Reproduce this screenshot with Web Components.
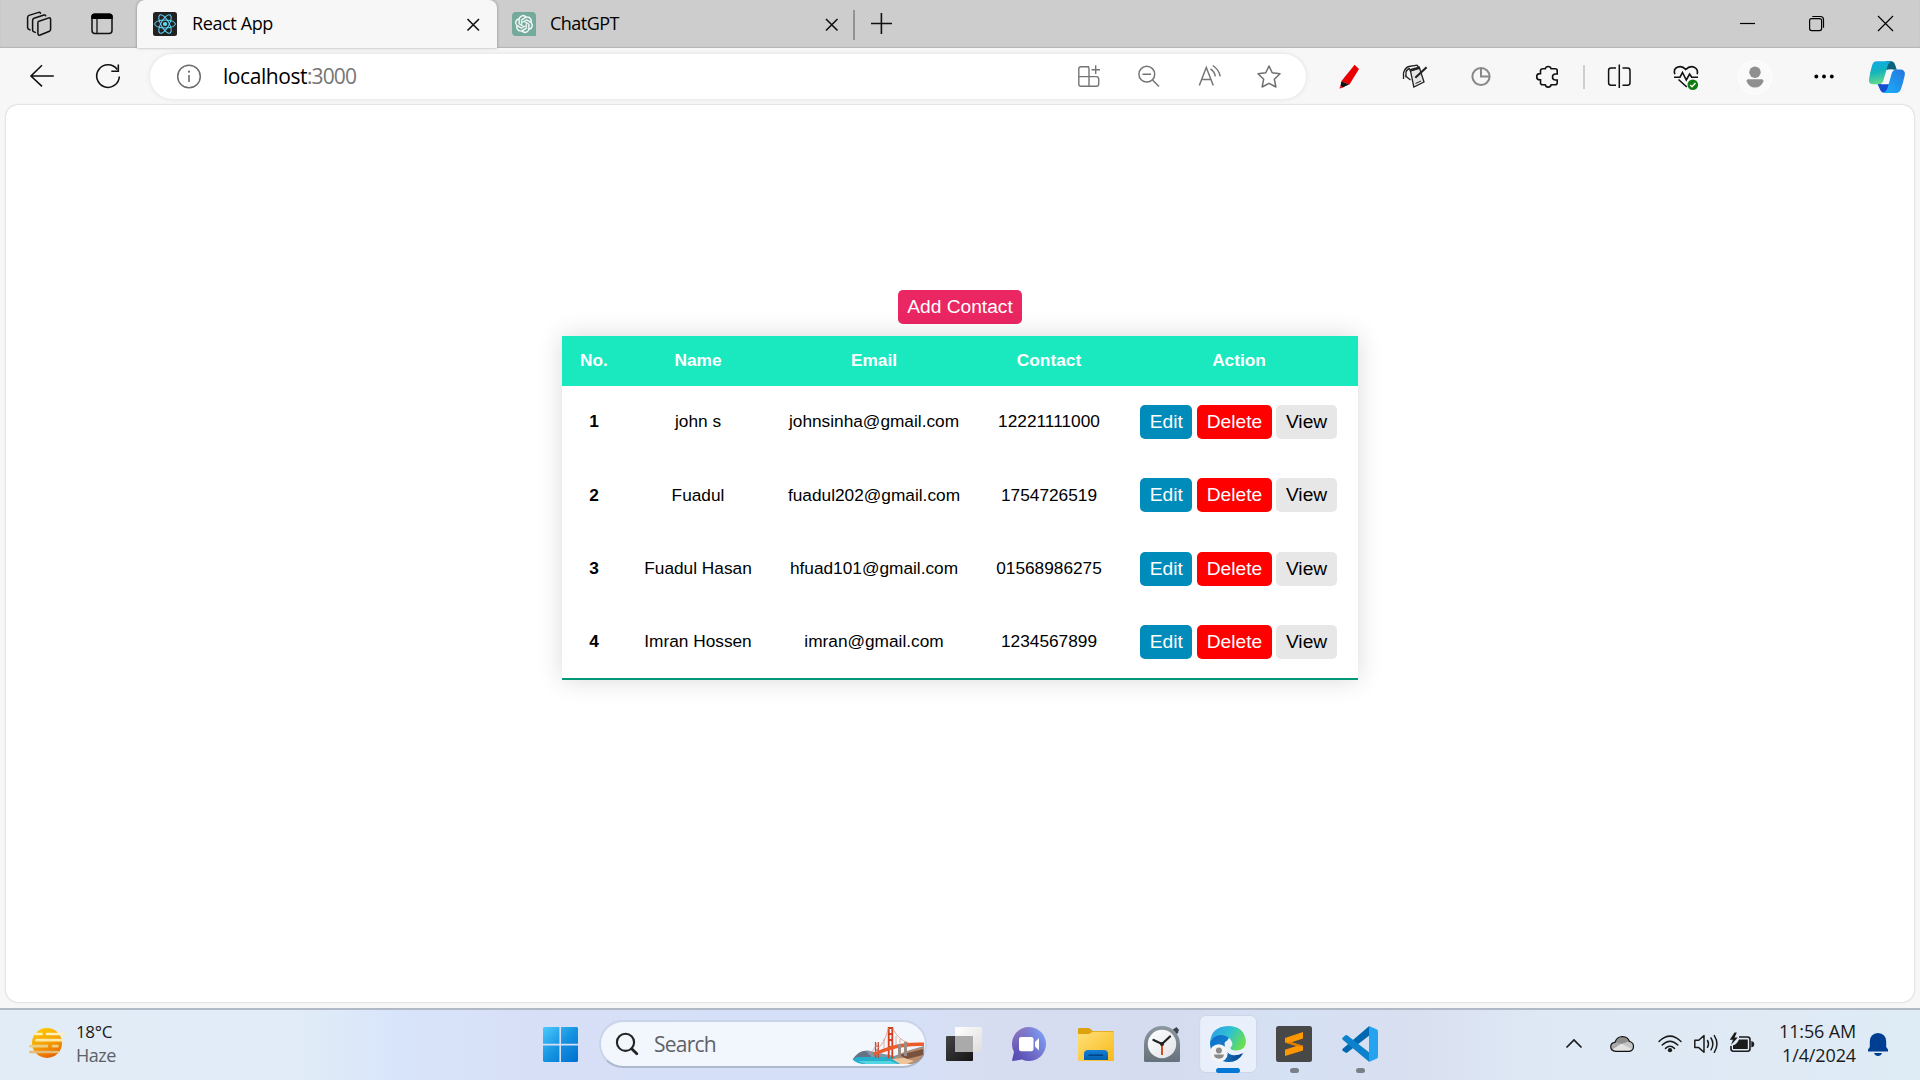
<!DOCTYPE html>
<html lang="en">
<head>
<meta charset="utf-8">
<title>React App</title>
<style>
html,body{margin:0;height:100%;overflow:hidden;font-family:"Open Sans","Noto Sans",sans-serif;color:#000}
</style>
</head>
<body>
<desktop-screen></desktop-screen>
<script>
const ICONS = {
workspaces:`<g fill="none" stroke="#111" stroke-width="1.5" stroke-linejoin="round" stroke-linecap="round"><path d="M38.3 21.5 L49 17.9 Q50.6 17.6 50.6 19.2 V29.3 Q50.6 30.7 49.4 31.3 L40.2 35 Q38.3 35.6 37.9 33.8 V23 Q37.9 21.8 38.3 21.5Z"/><path d="M35.3 32.4 L33.5 31.6 Q32.6 31.2 32.6 30 V20.4 Q32.7 18.8 34 18.2 L44 15 Q45.3 14.7 45.7 15.8"/><path d="M30 29.9 L28.4 29 Q27.6 28.5 27.6 27.3 V17.5 Q27.7 16 29 15.4 L38.7 12.4 Q40 12.2 40.5 13.3"/></g>`,
tabmenu:`<rect x="92" y="14.3" width="20" height="19.3" rx="3" fill="none" stroke="#111" stroke-width="1.5"/><path d="M91.3 19 V16.5 Q91.3 13.5 94.5 13.5 H109.5 Q112.7 13.5 112.7 16.5 V19Z"/><path d="M97 19 V33.5" stroke="#111" stroke-width="1.3"/>`,
react:`<rect x="153" y="12" width="24" height="24" rx="2.5" fill="#222"/><g fill="none" stroke="#61dafb" stroke-width="1"><ellipse cx="165" cy="24" rx="10.4" ry="4"/><ellipse cx="165" cy="24" rx="10.4" ry="4" transform="rotate(60 165 24)"/><ellipse cx="165" cy="24" rx="10.4" ry="4" transform="rotate(120 165 24)"/></g><circle cx="165" cy="24" r="2.1" fill="#61dafb"/>`,
close1:`<path d="M467.5 19 L479 30.5 M479 19 L467.5 30.5" stroke="#111" stroke-width="1.6"/>`,
gpt:`<path d="M512 16 Q512 12 516 12 H532 Q536 12 536 16 V36 H516 Q512 36 512 32Z" fill="#74aa9c"/><g transform="translate(515.1 15.1) scale(.742)"><path fill="#fff" stroke="#fff" stroke-width=".3" d="M22.2819 9.8211a5.9847 5.9847 0 0 0-.5157-4.9108 6.0462 6.0462 0 0 0-6.5098-2.9A6.0651 6.0651 0 0 0 4.9807 4.1818a5.9847 5.9847 0 0 0-3.9977 2.9 6.0462 6.0462 0 0 0 .7427 7.0966 5.98 5.98 0 0 0 .511 4.9107 6.051 6.051 0 0 0 6.5146 2.9001A5.9847 5.9847 0 0 0 13.2599 24a6.0557 6.0557 0 0 0 5.7718-4.2058 5.9894 5.9894 0 0 0 3.9977-2.9001 6.0557 6.0557 0 0 0-.7475-7.0729zm-9.022 12.6081a4.4755 4.4755 0 0 1-2.8764-1.0408l.1419-.0804 4.7783-2.7582a.7948.7948 0 0 0 .3927-.6813v-6.7369l2.02 1.1686a.071.071 0 0 1 .038.052v5.5826a4.504 4.504 0 0 1-4.4945 4.4944zm-9.6607-4.1254a4.4708 4.4708 0 0 1-.5346-3.0137l.142.0852 4.783 2.7582a.7712.7712 0 0 0 .7806 0l5.8428-3.3685v2.3324a.0804.0804 0 0 1-.0332.0615L9.74 19.9502a4.4992 4.4992 0 0 1-6.1408-1.6464zM2.3408 7.8956a4.485 4.485 0 0 1 2.3655-1.9728V11.6a.7664.7664 0 0 0 .3879.6765l5.8144 3.3543-2.0201 1.1685a.0757.0757 0 0 1-.071 0l-4.8303-2.7865A4.504 4.504 0 0 1 2.3408 7.872zm16.5963 3.8558L13.1038 8.364 15.1192 7.2a.0757.0757 0 0 1 .071 0l4.8303 2.7913a4.4944 4.4944 0 0 1-.6765 8.1042v-5.6772a.79.79 0 0 0-.407-.667zm2.0107-3.0231l-.142-.0852-4.7735-2.7818a.7759.7759 0 0 0-.7854 0L9.409 9.2297V6.8974a.0662.0662 0 0 1 .0284-.0615l4.8303-2.7866a4.4992 4.4992 0 0 1 6.6802 4.66zM8.3065 12.863l-2.02-1.1638a.0804.0804 0 0 1-.038-.0567V6.0742a4.4992 4.4992 0 0 1 7.3757-3.4537l-.142.0805L8.704 5.459a.7948.7948 0 0 0-.3927.6813zm1.0976-2.3654l2.602-1.4998 2.6069 1.4998v2.9994l-2.5974 1.4997-2.6067-1.4997Z"/></g>`,
close2:`<path d="M826 19 L837.5 30.5 M837.5 19 L826 30.5" stroke="#111" stroke-width="1.6"/>`,
plus:`<path d="M854 10 V40" stroke="#858585" stroke-width="1.6"/><path d="M871 23.5 H892 M881.4 13 V34" stroke="#111" stroke-width="1.6"/>`,
min:`<path d="M1740 23.5 H1755" stroke="#000" stroke-width="1.2"/>`,
restore:`<g fill="none" stroke="#000" stroke-width="1.2"><rect x="1809.6" y="18.6" width="12" height="12" rx="2"/><path d="M1812.3 16.5 H1820.5 Q1823.5 16.5 1823.5 19.5 V27.8"/></g>`,
winclose:`<path d="M1878 16 L1893 31 M1893 16 L1878 31" stroke="#000" stroke-width="1.2"/>`,
back:`<path d="M53.8 76 H31 M42 65.3 L31 76 L42 86.3" fill="none" stroke="#111" stroke-width="1.6"/>`,
reload:`<path d="M117.2 69.5 A11.3 11.3 0 1 0 119.3 76.5" fill="none" stroke="#111" stroke-width="1.6"/><path d="M118.3 64.5 V71.2 H111.3" fill="none" stroke="#111" stroke-width="1.6"/>`,
info:`<circle cx="189" cy="76.5" r="11.3" fill="none" stroke="#6d6d6d" stroke-width="1.5"/><path d="M189 75 V82" stroke="#6d6d6d" stroke-width="1.6"/><circle cx="189" cy="71.7" r="1.1" fill="#6d6d6d"/>`,
apps:`<g fill="none" stroke="#757575" stroke-width="1.4"><path d="M1089 66.7 H1081 Q1078.8 66.7 1078.8 69 V84 Q1078.8 86.3 1081 86.3 H1096.5 Q1098.7 86.3 1098.7 84 V78.8 Q1098.7 76.6 1096.5 76.6 H1078.8 M1089 86.3 V68.5 Q1089 66.7 1087 66.7 H1081"/><path d="M1091.5 69.7 H1100 M1095.7 65.3 V74"/></g>`,
zoomout:`<g fill="none" stroke="#757575" stroke-width="1.5"><circle cx="1146.8" cy="74.2" r="7.9"/><path d="M1142.5 74.2 H1151 M1152.5 80 L1159 86.5"/></g>`,
read:`<g fill="none" stroke="#757575" stroke-width="1.5"><path d="M1199.3 85.5 L1206.3 67.5 L1213.3 85.5 M1202 79.5 H1210.7"/><path d="M1210.5 68.8 Q1214.6 71.5 1215.3 76.3 M1212.8 65.5 Q1218.7 69.5 1220.3 76.3"/></g>`,
star:`<path d="M1269 66 L1272.2 72.7 L1280 73.8 L1274.3 79.2 L1275.9 87 L1269 83.3 L1262.1 87 L1263.7 79.2 L1258 73.8 L1265.8 72.7Z" fill="none" stroke="#6f6f6f" stroke-width="1.5" stroke-linejoin="round"/>`,
pen:`<path d="M1354.6 64.8 L1359 69 L1349.3 84.7 L1341.3 81.2Z" fill="#e80000"/><path d="M1341.3 81.2 L1349 84.6 L1342.8 87.6 L1340.5 86Z" fill="#111"/><path d="M1340.5 85.6 L1343.3 87.8 L1339.4 88.6Z" fill="#f01020"/>`,
notebook:`<g fill="none" stroke="#222" stroke-width="1.3"><path d="M1410.5 71 L1419.5 68 L1424 82 L1413.8 87Z" fill="#e5e5e5"/><path d="M1409.5 70.6 L1420 67.6" stroke-width="2.6"/><path d="M1403.5 79 V73 Q1405 67.5 1409 66.5 L1417 65.2 L1418.8 67.5 M1406 77.5 V72 Q1407 68.8 1410 68.5 M1410.5 80 L1405 75.5"/><path d="M1426.6 67.3 L1415.3 77.8" stroke-width="2.2"/><path d="M1415.5 83.5 L1421 81" stroke-width="1"/></g>`,
pie:`<g fill="none" stroke="#888" stroke-width="2"><circle cx="1481" cy="76.5" r="8.6"/><path d="M1481 68 V76.5 H1489.5"/></g>`,
puzzle:`<path d="M1543 68.8 H1545.2 A3.1 3.1 0 0 1 1551.2 68.8 H1555.2 Q1557.2 68.8 1557.2 70.8 V74 H1555.5 A3 3 0 0 0 1555.5 80 H1557.2 V82.8 Q1557.2 84.8 1555.2 84.8 H1551.2 A3.1 3.1 0 0 1 1545.2 84.8 H1542.6 Q1540.5 84.8 1540.5 82.8 V79.8 H1539.8 A3 3 0 0 1 1539.8 73.6 H1540.5 V70.8 Q1540.5 68.8 1543 68.8Z" fill="none" stroke="#111" stroke-width="1.6"/>`,
divider:`<path d="M1584 65 V89" stroke="#c8c8c8" stroke-width="1.7"/>`,
split:`<g fill="none" stroke="#111" stroke-width="1.5"><path d="M1616 68 H1611 Q1608.6 68 1608.6 70.4 V82.8 Q1608.6 85.2 1611 85.2 H1616 M1622.5 68 H1627.6 Q1630 68 1630 70.4 V82.8 Q1630 85.2 1627.6 85.2 H1622.5 M1619.3 64.5 V88"/></g>`,
heart:`<g fill="none" stroke="#111" stroke-width="1.6"><path d="M1674.8 74.2 Q1673.2 69.3 1677.2 67.3 Q1682 65.3 1685.8 69.5 Q1689.8 65.3 1694.3 67.3 Q1698.5 69.5 1697.2 74.2"/><path d="M1674 77.2 H1680 L1682.5 72.5 L1686.3 80 L1689.6 74 L1691.7 77.2 H1698 M1678.5 79.5 L1686.8 87"/></g><circle cx="1692.8" cy="84.8" r="5.3" fill="#107c10"/><path d="M1690.2 85 L1692 86.8 L1695.5 83" fill="none" stroke="#fff" stroke-width="1.4"/>`,
profile:`<circle cx="1755" cy="77.3" r="16.8" fill="#fafafa" stroke="#fff"/><circle cx="1755" cy="72.2" r="5.7" fill="#8f8f8f"/><path d="M1748 79.2 H1762 Q1764 79.5 1763.4 81.5 Q1761 87.5 1755 87.5 Q1749 87.5 1746.7 81.5 Q1746 79.5 1748 79.2Z" fill="#8f8f8f"/>`,
dots:`<circle cx="1816.3" cy="76.5" r="1.9"/><circle cx="1824" cy="76.5" r="1.9"/><circle cx="1831.8" cy="76.5" r="1.9"/>`,
copilot:`<defs><linearGradient id="a" x1="0" y1="0" x2=".2" y2="1"><stop offset="0" stop-color="#10a8ec"/><stop offset=".5" stop-color="#14b4bd"/><stop offset="1" stop-color="#60d98c"/></linearGradient><linearGradient id="b" x1="1" y1="0" x2="0" y2="1"><stop offset="0" stop-color="#2674dd"/><stop offset="1" stop-color="#18b4fc"/></linearGradient></defs><path d="M1886 61 H1890 Q1894 61 1895.2 65 L1896.8 69.8 H1885Z" fill="#0c617d"/><path d="M1877.5 84 H1889 L1887 93 Q1881.5 93.5 1880 89.5Z" fill="#164ed3"/><path d="M1876.5 61.2 H1892 Q1888.8 62 1887.6 66 L1883.4 80.5 Q1882.3 84.3 1878.5 84.3 H1872.5 Q1868 84 1869.1 79 Q1870 72 1872.2 65 Q1873.3 61.2 1876.5 61.2Z" fill="url(#a)"/><path d="M1896.5 69.5 H1900 Q1905.6 69.5 1904.8 75 Q1903 83.5 1901 89 Q1899.5 93 1896 93 H1883 Q1886.3 92 1887.4 88.5 L1891.5 74 Q1892.7 69.5 1896.5 69.5Z" fill="url(#b)"/><path d="M1888.5 69.6 H1893.5 Q1891.6 70.5 1890.8 73.5 L1887.8 84.2 H1881 Q1883 83.4 1883.8 80.5 L1886.3 72 Q1886.9 69.8 1888.5 69.6Z" fill="#f7f7f7"/>`,
weather:`<defs><linearGradient id="w" x1=".3" y1="0" x2=".7" y2="1"><stop offset="0" stop-color="#ffc800"/><stop offset=".5" stop-color="#f5a000"/><stop offset="1" stop-color="#e65f00"/></linearGradient></defs><circle cx="47" cy="1043" r="15" fill="url(#w)"/><g stroke-linecap="round" stroke-width="2.7"><path d="M36 1034 H41.5 M47 1034 H63.5" stroke="#fff0c0"/><path d="M36.5 1040.2 H61.5" stroke="#ffe9a9"/><path d="M30.3 1046.2 H47 M53 1046.2 H57.5" stroke="#ecce80"/><path d="M30.5 1052 H58" stroke="#e6bd78"/></g>`,
start:`<defs><linearGradient id="s" gradientUnits="userSpaceOnUse" x1="543" y1="1027" x2="578" y2="1062"><stop offset="0" stop-color="#4cc9ff"/><stop offset=".5" stop-color="#1593e0"/><stop offset="1" stop-color="#006fd0"/></linearGradient></defs><path fill="url(#s)" d="M544 1027 H559.4 V1043.8 H543 V1028Z M561 1027 H577 L578 1028 V1043.8 H561Z M543 1045.4 H559.4 V1062 H544 L543 1061Z M561 1045.4 H578 V1061 L577 1062 H561Z"/>`,
mag:`<circle cx="625.5" cy="1042.3" r="8.6" fill="none" stroke="#222" stroke-width="2.1"/><path d="M631.7 1048.7 L636.8 1053.8" stroke="#222" stroke-width="2.8" stroke-linecap="round"/>`,
bridge:`<path d="M853 1059 Q860 1050 868 1050.5 L879 1053 L894 1056 L910 1050 L924 1046 V1055 Q920 1064 908 1064 H864 Q856 1063 853 1059Z" fill="#8295a4"/><path d="M853 1059 Q859 1050 866 1051 L872 1058Z" fill="#647485"/><path d="M857 1057 H895 L912 1062 L909 1064 H866 Q857 1064 852.5 1059.5Z" fill="#26b0ce"/><path d="M858 1061 H890 L898 1064 H866Z" fill="#55d4e4"/><path d="M893 1059 L904 1052 L924 1047 V1053 Q921 1062 910 1064 H902Z" fill="#b98d6d"/><path d="M899 1055 L923 1049 V1055 L907 1059Z" fill="#79523f"/><path d="M892 1059 L904 1058 L914 1061 L907 1064 H900Z" fill="#efc59c"/><path d="M875.5 1042 V1058 M878.3 1042 V1058 M875.5 1046 H878.3 M875.5 1050 H878.3" stroke="#c0452f" stroke-width="1.2"/><path d="M888.7 1027 V1058.5 M892.3 1027 V1058.5 M888 1028 H893 M888 1034 H893 M888 1040 H893 M888 1047 H893" stroke="#d2401f" stroke-width="1.8"/><path d="M892.5 1028 Q898 1040 909 1043 M888.5 1028 Q884 1045 877 1049 M877 1043 Q873 1052 869 1054 M884 1039 V1050 M896 1036 V1048 M900 1039 V1046" fill="none" stroke="#dc8a72" stroke-width=".7"/><path d="M873 1053 Q890 1045 903 1043.5 Q914 1042 924 1042.5 V1046 Q905 1045.5 892 1049.5 L874 1055.5Z" fill="#ed5b2a"/><path d="M899.5 1044 V1057 M905.5 1042 V1056" stroke="#9b8d83" stroke-width="3"/>`,
taskview:`<defs><linearGradient id="t1" x1="0" y1="0" x2="1" y2="1"><stop offset="0" stop-color="#444"/><stop offset="1" stop-color="#151515"/></linearGradient><linearGradient id="t2" x1="0" y1="0" x2="1" y2="1"><stop offset="0" stop-color="#fff"/><stop offset="1" stop-color="#ddd"/></linearGradient></defs><rect x="946" y="1036" width="27" height="25" rx="1" fill="url(#t1)"/><rect x="955" y="1027" width="27" height="25" rx="1" fill="url(#t2)"/><path d="M955 1036 H973 V1052 H955Z" fill="#aaa"/>`,
chat:`<defs><linearGradient id="c" x1=".9" y1=".2" x2=".1" y2=".8"><stop offset="0" stop-color="#7d9af0"/><stop offset=".5" stop-color="#7170cc"/><stop offset="1" stop-color="#5a4fb4"/></linearGradient><linearGradient id="c2" x1="0" y1="0" x2="1" y2="1"><stop offset="0" stop-color="#a775b6" stop-opacity=".9"/><stop offset=".45" stop-color="#8a72be" stop-opacity="0"/></linearGradient></defs><path d="M1029 1027 A17 17 0 1 1 1022 1059.5 L1013 1061 Q1011.5 1061 1012.2 1059.5 L1014 1052 A17 17 0 0 1 1029 1027Z" fill="url(#c)"/><path d="M1029 1027 A17 17 0 1 1 1022 1059.5 L1013 1061 Q1011.5 1061 1012.2 1059.5 L1014 1052 A17 17 0 0 1 1029 1027Z" fill="url(#c2)"/><rect x="1019" y="1037" width="14.5" height="14.3" rx="2.2" fill="#fff"/><path d="M1035 1042 L1039 1038 V1050.5 L1035 1046.5Z" fill="#fff"/>`,
folder:`<defs><linearGradient id="f" x1="0" y1="0" x2="1" y2="1"><stop offset="0" stop-color="#ffe07a"/><stop offset="1" stop-color="#f8ba1a"/></linearGradient><linearGradient id="f2" x1="0" y1="0" x2="0" y2="1"><stop offset="0" stop-color="#1580d8"/><stop offset="1" stop-color="#0560b0"/></linearGradient></defs><path d="M1078 1029.3 Q1078 1028 1079.5 1028 H1088 Q1089.5 1028 1090.5 1029 L1092.7 1031 H1112.5 Q1114 1031 1114 1032.5 V1040 H1078Z" fill="#dda30f"/><path d="M1078 1034 H1089 L1092.6 1031.8 H1112.5 Q1114 1031.8 1114 1033.5 V1061 H1079.5 Q1078 1061 1078 1059.5Z" fill="url(#f)"/><path d="M1084 1060 V1054 Q1084 1050 1088 1050 H1104 Q1108 1050 1108 1054 V1060Z" fill="url(#f2)"/><path d="M1088.5 1055.2 H1103" stroke="#003f80" stroke-width="1.4"/>`,
clock:`<defs><linearGradient id="k" x1="0" y1="0" x2="0" y2="1"><stop offset="0" stop-color="#8b98a0"/><stop offset="1" stop-color="#66727b"/></linearGradient><linearGradient id="k2" x1="0" y1="0" x2="1" y2="1"><stop offset="0" stop-color="#fff"/><stop offset="1" stop-color="#dfe2e5"/></linearGradient></defs><path d="M1174 1029 L1176.5 1027 L1179 1030 L1178 1032Z M1171.5 1031 L1174.5 1028.3 L1178.5 1032.3 L1176 1035Z" fill="#3d454c"/><path d="M1144 1044 A18 18 0 0 1 1180 1044 V1060.5 Q1180 1062 1178.5 1062 H1145.5 Q1144 1062 1144 1060.5Z" fill="url(#k)"/><circle cx="1162" cy="1044" r="14.2" fill="url(#k2)"/><path d="M1162 1044 V1055" stroke="#d83b01" stroke-width="1.8"/><path d="M1153.5 1040 L1162 1044 L1170 1036.5" fill="none" stroke="#222" stroke-width="2.3" stroke-linecap="round"/><circle cx="1162" cy="1044" r="2" fill="#222"/>`,
edge:`<defs><linearGradient id="e1" x1="0" y1=".2" x2="1" y2=".6"><stop offset="0" stop-color="#2b9fe8"/><stop offset=".5" stop-color="#2fc2d0"/><stop offset="1" stop-color="#6be04b"/></linearGradient><linearGradient id="e2" x1="0" y1="0" x2=".7" y2="1"><stop offset="0" stop-color="#0b6cc6"/><stop offset="1" stop-color="#1592e2"/></linearGradient><linearGradient id="e3" x1="0" y1="0" x2="1" y2="0"><stop offset="0" stop-color="#1a86d0"/><stop offset="1" stop-color="#0a3f87"/></linearGradient></defs><rect x="1199.7" y="1015.5" width="56.8" height="57" rx="6" fill="#eaf0fb" fill-opacity=".95" stroke="#cdd6ea"/><path d="M1210 1042 Q1217 1028 1230 1036 Q1223 1045 1229 1054 Q1236 1059 1243.5 1053 Q1238 1063 1226 1062 Q1210 1059 1210 1042Z" fill="url(#e2)"/><path d="M1225 1040 Q1223 1053 1232 1055 Q1238 1056 1243 1052.8 Q1238.5 1062 1228 1062 Q1216 1059 1217 1048 Q1219 1041 1225 1040Z" fill="url(#e3)"/><path d="M1224.5 1043 Q1225.5 1040 1229 1040.5 Q1232.5 1042 1231 1046 L1229.8 1048.5 Q1231 1050.8 1236 1050.6 L1243.5 1050 L1243 1053 Q1237 1055.8 1232 1054.8 Q1224.5 1052.5 1224.5 1043Z" fill="#eaf0fb"/><path d="M1210 1043 Q1211 1026.5 1228 1026 Q1244 1026 1246 1041 Q1246 1050 1236.5 1050.4 Q1229 1050.5 1230.8 1047 Q1233 1045.5 1232 1042 Q1228.5 1035 1220.5 1035 Q1212.5 1035.5 1210 1043Z" fill="url(#e1)"/><circle cx="1218.7" cy="1053.2" r="9" fill="#f4f4f6"/><circle cx="1218.9" cy="1050.6" r="3" fill="#8b8b8b"/><path d="M1214 1054.5 H1223.8 Q1224 1058.5 1219 1058.7 Q1214 1058.5 1214 1054.5Z" fill="#8b8b8b"/><rect x="1216" y="1068" width="24" height="5" rx="2.5" fill="#0578d5"/>`,
sublime:`<rect x="1276" y="1026" width="36" height="36" rx="2.5" fill="#484848"/><path d="M1285 1038 L1303 1032 V1038.4 L1291.5 1042.2 L1303 1045.7 V1050.5 L1285 1056 V1049.7 L1296.5 1046 L1285 1042.5Z" fill="#ff9800"/><path d="M1285 1042.5 L1291.5 1042.2 L1303 1045.7 V1047 L1296.5 1046Z" fill="#e07e00"/><rect x="1290" y="1068" width="9" height="5" rx="2.5" fill="#7b7f88"/>`,
vscode:`<path d="M1342.3 1050.5 L1345.4 1052.6 Q1346.3 1053.2 1347.3 1052.5 L1369.3 1035.5 V1026 L1343 1048.5 Q1342 1049.5 1342.3 1050.5Z" fill="#0068b0"/><path d="M1342.3 1038 L1345.4 1035.2 Q1346.5 1034.7 1347.5 1035.4 L1369.3 1052.5 V1062 L1343 1040 Q1341.8 1039 1342.3 1038Z" fill="#0b82cb"/><path d="M1369 1026 L1377 1029.5 Q1378 1030 1378 1031.5 V1056.5 Q1378 1058 1377 1058.5 L1369 1062 Z" fill="#24a4ee"/><rect x="1356" y="1068" width="9" height="5" rx="2.5" fill="#7b7f88"/>`,
chevron:`<path d="M1566.5 1047.5 L1574 1040 L1581.5 1047.5" fill="none" stroke="#1b1b1b" stroke-width="1.7"/>`,
cloud:`<path d="M1616 1051.3 Q1610.7 1051 1610.7 1046.5 Q1611 1042.5 1615 1042.3 Q1617 1036.5 1622.5 1036.5 Q1628 1036.8 1629.5 1041.5 Q1633.5 1042.5 1633.5 1046.5 Q1633.3 1051 1629 1051.3Z" fill="#e2e2e2"/><path d="M1611 1047 Q1611 1042.5 1615 1042.3 L1621.5 1043.5 L1612.5 1049.5Z" fill="#aaa"/><path d="M1615 1042.3 Q1617 1036.5 1622.5 1036.5 Q1628 1036.8 1629.5 1041.5 L1622 1044Z" fill="#8e8e8e"/><path d="M1622 1044 L1629.5 1041.5 Q1633.5 1042.5 1633.5 1046.5 L1632 1049Z" fill="#c5c5c5"/><path d="M1616 1051.3 Q1610.7 1051 1610.7 1046.5 Q1611 1042.5 1615 1042.3 Q1617 1036.5 1622.5 1036.5 Q1628 1036.8 1629.5 1041.5 Q1633.5 1042.5 1633.5 1046.5 Q1633.3 1051 1629 1051.3Z" fill="none" stroke="#111" stroke-width="1.2"/>`,
wifi:`<g fill="none" stroke="#1b1b1b" stroke-width="1.5" stroke-linecap="round"><path d="M1659 1041.5 Q1670 1030.8 1681 1041.5"/><path d="M1662.2 1045 Q1670 1037.5 1677.8 1045"/><path d="M1665.5 1048.4 Q1670 1044 1674.5 1048.4"/></g><circle cx="1670" cy="1050.2" r="2.1" fill="#1b1b1b"/>`,
speaker:`<g fill="none" stroke="#1b1b1b" stroke-width="1.5" stroke-linecap="round" stroke-linejoin="round"><path d="M1694.8 1040.3 H1698.7 L1704 1035.6 V1052.2 L1698.7 1047.6 H1694.8Z"/><path d="M1707.5 1040.5 Q1709.5 1043.9 1707.5 1047.3 M1711 1038 Q1714.7 1043.9 1711 1049.8 M1714.3 1035.6 Q1719.6 1043.9 1714.3 1052.3"/></g>`,
battery:`<path d="M1739 1037 H1747.5 Q1750 1037 1750 1039.5 V1048.8 Q1750 1051.3 1747.5 1051.3 H1733.5 Q1731 1051.3 1731 1048.8 V1046" fill="none" stroke="#1b1b1b" stroke-width="1.6"/><path d="M1739 1039.4 H1747.8 V1049 H1733 V1045.2 Q1736.7 1044.5 1739 1039.4Z" fill="#1b1b1b"/><path d="M1751.3 1041 Q1754.2 1041.5 1754.2 1044.2 Q1754.2 1047 1751.3 1047.3Z" fill="#1b1b1b"/><path d="M1734.5 1032.5 L1729.8 1039.7 H1733 L1731 1045 L1737.8 1037.4 H1734.6 L1736.8 1032.5Z" fill="#1b1b1b"/>`,
bell:`<path d="M1878 1033 Q1886 1033.5 1886.2 1041.5 V1047 L1888 1049.5 V1051.5 H1868 V1049.5 L1869.8 1047 V1041.5 Q1870 1033.5 1878 1033Z" fill="#003e92"/><path d="M1874 1053 H1882 Q1881 1056 1878 1056 Q1875 1056 1874 1053Z" fill="#003e92"/>`
};

/* Icon whose viewBox is also its size: box="x y width height" */
customElements.define('ui-icon', class extends HTMLElement {
  connectedCallback() {
    const box = this.getAttribute('box'), [, , w, h] = box.split(' ');
    this.attachShadow({mode:'open'}).innerHTML = `<style>:host{display:block;flex:none;width:${w}px;height:${h}px}svg{display:block}</style><svg width="${w}" height="${h}" viewBox="${box}">${ICONS[this.getAttribute('name')]}</svg>`;
  }
});

/* Single-line label, tracked so that it fills the width in "w" */
customElements.define('ui-label', class extends HTMLElement {
  connectedCallback() {
    const w = +this.getAttribute('w');
    this.attachShadow({mode:'open'}).innerHTML = `<style>:host{display:block;flex:none;white-space:pre;width:${w}px}span{display:inline-block}</style><span><slot></slot></span>`;
    const s = this.shadowRoot.querySelector('span');
    s.style.letterSpacing = (w - s.getBoundingClientRect().width) / this.textContent.length + 'px';
  }
});

const define = (name, html) => {
  const t = document.createElement('template');
  t.innerHTML = html;
  customElements.define(name, class extends HTMLElement {
    constructor() { super(); this.attachShadow({mode:'open'}).append(t.content.cloneNode(true)); }
  });
};

define('action-button', `<style>
:host{display:block;box-sizing:border-box;height:34px;padding:0 9.6px;border-radius:5px;font:19.2px/33px "Liberation Sans",Arial,sans-serif;color:#fff;background:#008cba;white-space:nowrap}
:host([kind=add]){background:#ea2663}
:host([kind=delete]){background:#f00}
:host([kind=view]){background:#e7e7e7;color:#000}
</style><slot></slot>`);

customElements.define('contact-row', class extends HTMLElement {
  connectedCallback() {
    const cells = this.getAttribute('cells').split('|'), head = this.hasAttribute('head');
    this.attachShadow({mode:'open'}).innerHTML = `<style>
:host{display:grid;grid-template-columns:64px 144px 208px 142px 238px;align-items:center;text-align:center;height:73.3px}
:host([head]){height:50px;background:#1ae8bf;color:#fff;font-weight:700}
span{margin-top:-2.7px}
:host([head]) span{margin-top:-2px}
span:first-of-type{font-weight:700}
div{display:flex;gap:4.6px;justify-content:center;margin:-1.1px 1px 0 0}
</style>${cells.map(c => `<span>${c}</span>`).join('')}${head ? '' : '<div><action-button>Edit</action-button><action-button kind="delete">Delete</action-button><action-button kind="view">View</action-button></div>'}`;
  }
});

define('contact-table', `<style>
:host{display:block;width:796px;height:344px;box-sizing:border-box;border-bottom:2px solid #009879;box-shadow:0 0 24px rgba(0,0,0,.15);font:17.28px/20px "Liberation Sans",Arial,sans-serif}
</style>
<contact-row head cells="No.|Name|Email|Contact|Action"></contact-row>
<contact-row cells="1|john s|johnsinha@gmail.com|12221111000"></contact-row>
<contact-row cells="2|Fuadul|fuadul202@gmail.com|1754726519"></contact-row>
<contact-row cells="3|Fuadul Hasan|hfuad101@gmail.com|01568986275"></contact-row>
<contact-row cells="4|Imran Hossen|imran@gmail.com|1234567899"></contact-row>`);

define('browser-tab', `<style>
:host{display:flex;width:355px;height:48px;font-size:18px;line-height:47px}
:host([active]){width:360px;background:#f7f7f7;border-radius:8px 8px 0 0;box-shadow:0 0 3px rgba(0,0,0,.35)}
.gap{flex:1}
</style><slot name="icon"></slot><slot></slot><div class="gap"></div><slot name="close"></slot>`);

define('tab-strip', `<style>
:host{display:flex;height:48px;background:#cdcdcd;box-shadow:inset 0 -1px 1px #b4b4b4}
.gap{flex:1}
</style>
<ui-icon name="workspaces" box="0 0 70 48"></ui-icon><ui-icon name="tabmenu" box="70 0 67 48"></ui-icon>
<browser-tab active><ui-icon slot="icon" name="react" box="137 0 55 48"></ui-icon><ui-label w="81">React App</ui-label><ui-icon slot="close" name="close1" box="450 0 47 48"></ui-icon></browser-tab>
<browser-tab><ui-icon slot="icon" name="gpt" box="497 0 53 48"></ui-icon><ui-label w="69">ChatGPT</ui-label><ui-icon slot="close" name="close2" box="807 0 45 48"></ui-icon></browser-tab>
<ui-icon name="plus" box="852 0 60 48"></ui-icon>
<div class="gap"></div>
<ui-icon name="min" box="1713 0 69 48"></ui-icon><ui-icon name="restore" box="1782 0 69 48"></ui-icon><ui-icon name="winclose" box="1851 0 69 48"></ui-icon>`);

define('address-bar', `<style>
:host{display:flex;flex:none;box-sizing:border-box;width:1156px;height:45px;margin:6px 10px 0 9px;border-radius:23px;background:#fff;box-shadow:0 0 5px rgba(0,0,0,.1);font-size:21px;line-height:45px}
.port{color:#767676}.gap{flex:1}
</style>
<ui-icon name="info" box="150 54 73 45"></ui-icon><ui-label w="84">localhost</ui-label><ui-label class="port" w="49">:3000</ui-label><div class="gap"></div>
<ui-icon name="apps" box="1059 54 60 45"></ui-icon><ui-icon name="zoomout" box="1119 54 60 45"></ui-icon><ui-icon name="read" box="1179 54 60 45"></ui-icon><ui-icon name="star" box="1239 54 67 45"></ui-icon>`);

define('browser-toolbar', `<style>:host{display:flex;height:57px;background:#f7f7f7}</style>
<ui-icon name="back" box="0 48 75 57"></ui-icon><ui-icon name="reload" box="75 48 66 57"></ui-icon>
<address-bar></address-bar>
<ui-icon name="pen" box="1316 48 66 57"></ui-icon><ui-icon name="notebook" box="1382 48 66 57"></ui-icon><ui-icon name="pie" box="1448 48 66 57"></ui-icon><ui-icon name="puzzle" box="1514 48 67 57"></ui-icon><ui-icon name="divider" box="1581 48 6 57"></ui-icon><ui-icon name="split" box="1587 48 66 57"></ui-icon><ui-icon name="heart" box="1653 48 68 57"></ui-icon><ui-icon name="profile" box="1721 48 68 57"></ui-icon><ui-icon name="dots" box="1789 48 66 57"></ui-icon><ui-icon name="copilot" box="1855 48 65 57"></ui-icon>`);

define('browser-page', `<style>
:host{display:flex;flex-direction:column;align-items:center;box-sizing:border-box;width:1908px;height:897px;margin:0 6px 6px;padding-top:185px;background:#fff;border-radius:12px;box-shadow:0 0 2px rgba(0,0,0,.28)}
contact-table{margin-top:12px}
</style><action-button kind="add">Add Contact</action-button><contact-table></contact-table>`);

define('task-bar', `<style>
:host{display:flex;box-sizing:border-box;height:72px;border-top:2px solid #b1b8c6;background:linear-gradient(90deg,#e1ecf7 0,#e1ecf8 300px,#d8e4fa 400px,#d7dff6 540px,#d5e0f8 700px,#d5e0f8 900px,#d7ddf0 990px,#d6dcf0 1180px,#d5e1f4 1290px,#d8dff0 1390px,#dfe9f5 1560px,#dfeaf5 1780px,#deecf6 100%)}
.two{font-size:18px;line-height:24px;padding-top:9px;height:50px;color:#1b1b1b}
.temp{font-size:17px;height:24px;line-height:26px}
.mute{color:#5c6167}
.gap{flex:1}
.search{display:flex;box-sizing:border-box;width:328px;height:48px;margin:10px 2px 0 10px;border-radius:24px;background:#f2f6fd;border:2px solid #c9d4e9;border-bottom-color:#adbace;font-size:21px;line-height:44px;color:#5e6268}
.end{display:flex;flex-direction:column;align-items:flex-end;margin-left:20px}
</style>
<ui-icon name="weather" box="0 1010 76 70"></ui-icon>
<div class="two"><ui-label class="temp" w="36">18°C</ui-label><ui-label class="mute" w="40">Haze</ui-label></div>
<div class="gap"></div>
<ui-icon name="start" box="530 1010 59 70"></ui-icon>
<div class="search"><ui-icon name="mag" box="601 1022 53 44"></ui-icon><ui-label w="62">Search</ui-label><div class="gap"></div><ui-icon name="bridge" box="851 1022 74 44"></ui-icon></div>
<ui-icon name="taskview" box="929 1010 67 70"></ui-icon><ui-icon name="chat" box="996 1010 66 70"></ui-icon><ui-icon name="folder" box="1062 1010 67 70"></ui-icon><ui-icon name="clock" box="1129 1010 66 70"></ui-icon><ui-icon name="edge" box="1195 1010 66 70"></ui-icon><ui-icon name="sublime" box="1261 1010 66 70"></ui-icon><ui-icon name="vscode" box="1327 1010 66 70"></ui-icon>
<div style="width:157px"></div>
<ui-icon name="chevron" box="1550 1010 48 70"></ui-icon><ui-icon name="cloud" box="1598 1010 48 70"></ui-icon><ui-icon name="wifi" box="1646 1010 42 70"></ui-icon><ui-icon name="speaker" box="1688 1010 36 70"></ui-icon><ui-icon name="battery" box="1724 1010 35 70"></ui-icon>
<div class="two end"><ui-label w="77">11:56 AM</ui-label><ui-label w="74">1/4/2024</ui-label></div>
<ui-icon name="bell" box="1856 1010 64 70"></ui-icon>`);

define('desktop-screen', `<style>:host{display:block;width:1920px;height:1080px;background:#f7f7f7}</style>
<tab-strip></tab-strip><browser-toolbar></browser-toolbar><browser-page></browser-page><task-bar></task-bar>`);
</script>
</body>
</html>
